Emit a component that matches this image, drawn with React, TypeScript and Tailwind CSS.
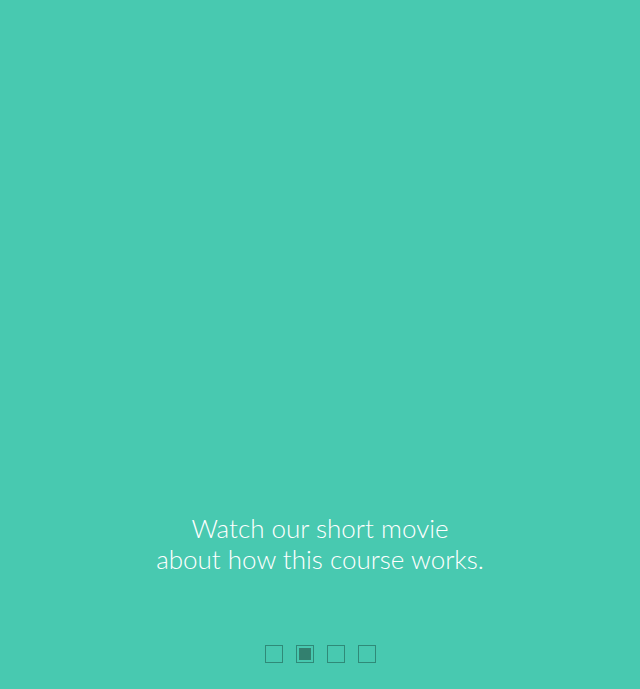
const slides = [0, 1, 2, 3];

export default function App() {
  const active = 1;
  return (
    <div className="flex h-[689px] w-full flex-col items-center justify-end bg-[#48c9b0] pb-[26px] font-['Lato',sans-serif] text-white">
      <p className="text-center text-[26px] leading-[31px] font-light">
        Watch our short movie
        <br />
        about how this course works.
      </p>
      <div className="mt-[70px] flex gap-[13px]">
        {slides.map((i) => (
          <span
            key={i}
            className="flex h-[18px] w-[18px] items-center justify-center border border-[#2f8a78]"
          >
            {i === active && <span className="h-[12px] w-[12px] bg-[#33806f]" />}
          </span>
        ))}
      </div>
    </div>
  );
}
